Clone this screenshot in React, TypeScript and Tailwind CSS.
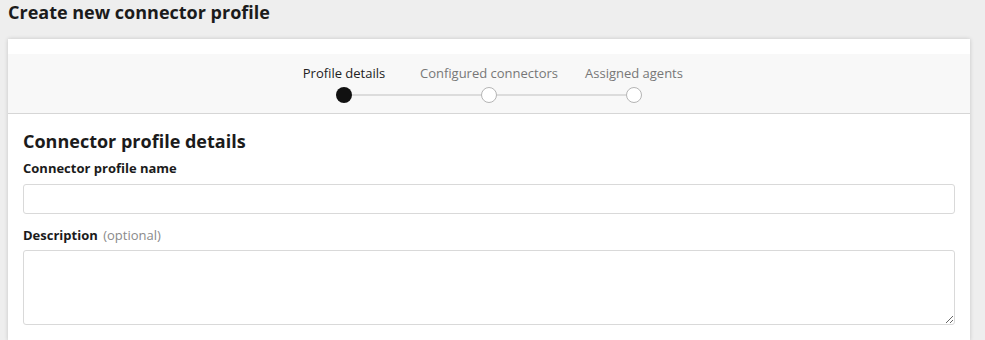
import React from "react";

const steps = ["Profile details", "Configured connectors", "Assigned agents"];

function Stepper() {
  return (
    <div className="flex flex-col items-center pt-[10px] pb-[10px]">
      <div className="flex">
        {steps.map((s, i) => (
          <div
            key={s}
            className={`w-[145px] text-center text-[13px] leading-[18px] whitespace-nowrap ${
              i === 0 ? "text-[#222]" : "text-[#777]"
            }`}
          >
            {s}
          </div>
        ))}
      </div>
      <div className="mt-[5px] flex items-center w-[306px]">
        <div className="w-4 h-4 rounded-full bg-[#111] shrink-0" />
        <div className="flex-1 h-[2px] bg-[#dcdcdc]" />
        <div className="w-4 h-4 rounded-full border border-[#b5b5b5] bg-white shrink-0" />
        <div className="flex-1 h-[2px] bg-[#dcdcdc]" />
        <div className="w-4 h-4 rounded-full border border-[#b5b5b5] bg-white shrink-0" />
      </div>
    </div>
  );
}

export default function App() {
  return (
    <main
      className="min-h-screen bg-[#eeeeee] px-2 text-[#1b1b1b]"
      style={{ fontFamily: '"Open Sans", "Liberation Sans", sans-serif' }}
    >
      <h1 className="text-[18px] leading-[24px] font-bold mb-[15px]">Create new connector profile</h1>

      <div className="w-[962px] bg-white shadow-[0_0_4px_rgba(0,0,0,0.18)]">
        <div className="h-[15px]" />
        <div className="bg-[#f8f8f8] border-b border-[#d6d6d6]">
          <Stepper />
        </div>

        <div className="px-[15px] pt-[15px] pb-4">
          <h2 className="text-[18px] leading-[24px] font-bold">Connector profile details</h2>

          <label className="block mt-[6px] text-[13px] leading-[18px] font-bold">Connector profile name</label>
          <input
            type="text"
            className="block mt-[7px] w-full h-[30px] rounded-[3px] border border-[#d9d9d9] bg-white px-2 text-[13px] outline-none"
          />

          <label className="block mt-[12px] text-[13px] leading-[18px] font-bold">
            Description <span className="ml-0.5 font-normal text-[#8a8a8a]">(optional)</span>
          </label>
          <textarea className="block mt-[6px] w-full h-[75px] rounded-[3px] border border-[#d9d9d9] bg-white px-2 py-1 text-[13px] outline-none" />
        </div>
      </div>
    </main>
  );
}
